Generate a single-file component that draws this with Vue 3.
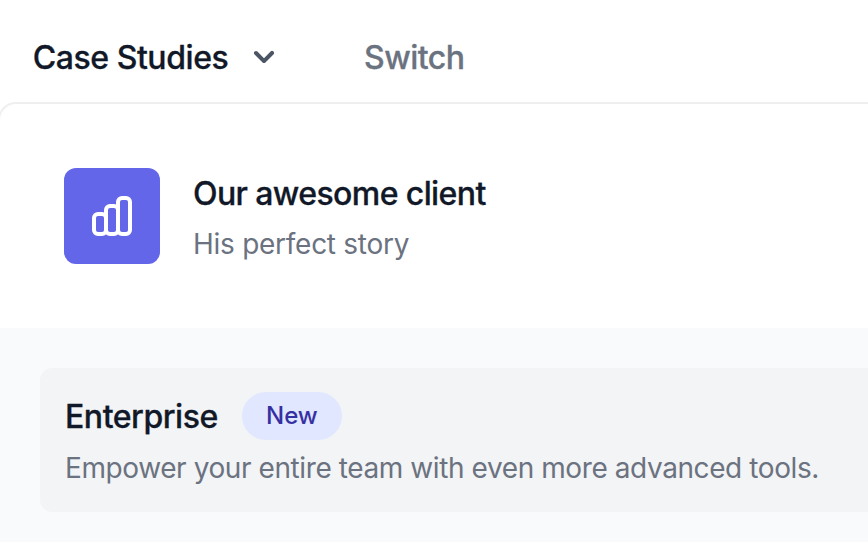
<script setup>
const title = 'Case Studies'
</script>

<template>
  <div class="page">
    <nav class="nav">
      <button class="trigger"><span class="trigger-label">{{ title }}</span>
        <svg class="chevron" viewBox="0 0 20 20" fill="currentColor"><path fill-rule="evenodd" clip-rule="evenodd" d="M5.293 7.293a1 1 0 011.414 0L10 10.586l3.293-3.293a1 1 0 111.414 1.414l-4 4a1 1 0 01-1.414 0l-4-4a1 1 0 010-1.414z" /></svg>
      </button>
      <a class="switch">Switch</a>
    </nav>
    <section class="panel">
      <div class="client">
        <div class="tile">
          <svg viewBox="0 0 24 24" fill="none" stroke="currentColor" stroke-width="2" stroke-linecap="round" stroke-linejoin="round"><path d="M9 19v-6a2 2 0 00-2-2H5a2 2 0 00-2 2v6a2 2 0 002 2h2a2 2 0 002-2zm0 0V9a2 2 0 012-2h2a2 2 0 012 2v10m-6 0a2 2 0 002 2h2a2 2 0 002-2m0 0V5a2 2 0 012-2h2a2 2 0 012 2v14a2 2 0 01-2 2h-2a2 2 0 01-2-2z" /></svg>
        </div>
        <div class="copy">
          <p class="heading client-name">Our awesome client</p>
          <p class="sub client-story">His perfect story</p>
        </div>
      </div>
      <div class="footer">
        <div class="enterprise">
          <div class="row">
            <span class="heading">Enterprise</span>
            <span class="badge">New</span>
          </div>
          <p class="sub summary">Empower your entire team with even more advanced tools.</p>
        </div>
      </div>
    </section>
  </div>
</template>

<style>
body { background: #fff; overflow: hidden; }
</style>

<style scoped>
.page { width: 868px; height: 542px; box-sizing: border-box; overflow: hidden; display: flex; flex-direction: column; font-family: Inter, "Liberation Sans", sans-serif; color: #111827; }
p { margin: 0; }
.nav { display: flex; align-items: center; height: 102px; box-sizing: border-box; padding: 12px 0 0 32px; flex: none; }
.trigger { display: flex; align-items: center; padding: 0; border: 0; background: none; font: inherit; font-size: 32px; font-weight: 500; line-height: 48px; color: #111827; white-space: nowrap; }
.trigger-label { width: 197px; padding-top: 1px; letter-spacing: -0.44px; -webkit-text-stroke: 0.3px currentColor; }
.chevron { width: 40px; height: 40px; margin-left: 15px; color: #4b5563; }
.switch { margin-left: 80px; padding-top: 1px; font-size: 32px; font-weight: 500; line-height: 48px; color: #6b7280; letter-spacing: -0.5px; -webkit-text-stroke: 0.3px currentColor; }
.panel { flex: 1; margin: 0 -2px 0 -2px; border: 2px solid #efeff0; border-width: 2px 0 0 2px; border-radius: 18px 0 0 0; overflow: hidden; display: flex; flex-direction: column; }
.client { display: flex; height: 224px; box-sizing: border-box; padding: 64px 64px 0; flex: none; }
.tile { width: 96px; height: 96px; border-radius: 12px; background: #6466e9; color: #fff; display: flex; align-items: center; justify-content: center; }
.tile svg { width: 48px; height: 48px; }
.copy { margin-left: 33px; }
.heading { padding-top: 2px; font-size: 32px; font-weight: 500; line-height: 48px; letter-spacing: -0.45px; white-space: nowrap; -webkit-text-stroke: 0.3px currentColor; }
.client-name { letter-spacing: -0.6px; }
.sub { font-size: 28px; line-height: 40px; color: #6b7280; white-space: nowrap; }
.copy .sub { margin-top: 6px; }
.client-story { letter-spacing: -0.27px; }
.summary { letter-spacing: -0.41px; }
.footer { flex: 1; background: #f9fafb; padding: 40px 0 0 40px; }
.enterprise { height: 144px; box-sizing: border-box; padding: 24px 0 0 25px; border-radius: 12px 0 0 12px; background: #f3f4f6; }
.row { display: flex; align-items: center; height: 48px; }
.badge { margin-left: 24px; width: 100px; height: 48px; border-radius: 24px; background: #e0e7ff; color: #3730a3; font-size: 24px; font-weight: 500; line-height: 48px; text-align: center; }
.enterprise .sub { margin-top: 8px; }
</style>
